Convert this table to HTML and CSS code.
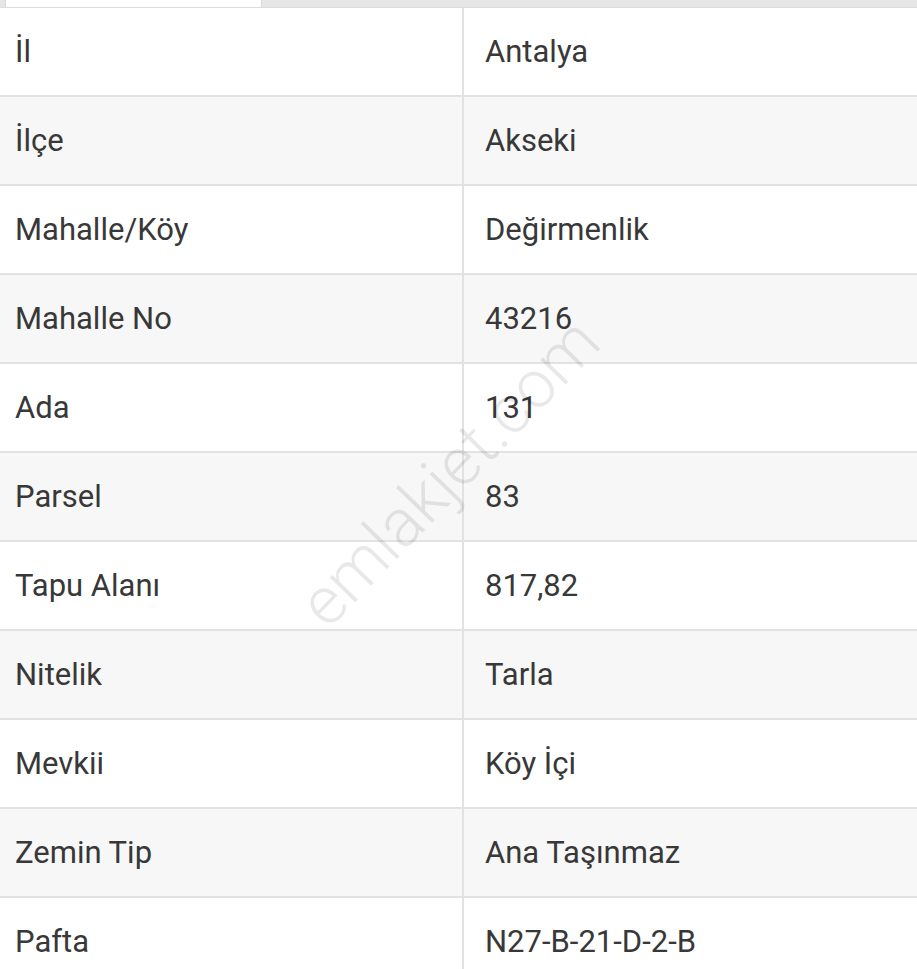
FILE: index.html
```html
<!DOCTYPE html>
<html lang="tr">
<head>
<meta charset="utf-8">
<link rel="stylesheet" href="styles.css">
</head>
<body>
<div class="page">
  <div class="tabs">
    <div class="tab"></div>
    <div class="tab-rest"></div>
  </div>
  <div class="table">
    <div class="row"><div class="key">İl</div><div class="val">Antalya</div></div>
    <div class="row alt"><div class="key">İlçe</div><div class="val">Akseki</div></div>
    <div class="row"><div class="key">Mahalle/Köy</div><div class="val">Değirmenlik</div></div>
    <div class="row alt"><div class="key">Mahalle No</div><div class="val">43216</div></div>
    <div class="row"><div class="key">Ada</div><div class="val">131</div></div>
    <div class="row alt"><div class="key">Parsel</div><div class="val">83</div></div>
    <div class="row"><div class="key">Tapu Alanı</div><div class="val">817,82</div></div>
    <div class="row alt"><div class="key">Nitelik</div><div class="val">Tarla</div></div>
    <div class="row"><div class="key">Mevkii</div><div class="val">Köy İçi</div></div>
    <div class="row alt"><div class="key">Zemin Tip</div><div class="val">Ana Taşınmaz</div></div>
    <div class="row"><div class="key">Pafta</div><div class="val">N27-B-21-D-2-B</div></div>
  </div>
  <div class="watermark">emlakjet.com</div>
</div>
</body>
</html>
```
FILE: styles.css
```css
* { box-sizing: border-box; }
html, body { margin: 0; padding: 0; background: #fff; }
body { font-family: Roboto, "Noto Sans", sans-serif; color: #383838; overflow: hidden; }
.page { position: relative; width: 917px; height: 969px; overflow: hidden; }
.tabs { display: flex; height: 8px; background: #e6e6e6; border-bottom: 1px solid #dcdcdc; }
.tab { width: 257px; margin-left: 5px; background: #fff; border-left: 1px solid #d8d8d8; border-right: 1px solid #d8d8d8; }
.tab-rest { flex: 1; }
.table { display: flex; flex-direction: column; }
.row { display: grid; grid-template-columns: 464px 1fr; height: 89px; border-bottom: 2px solid #e2e2e2; background: #fff; }
.row.alt { background: #f7f7f7; }
.key, .val { display: flex; align-items: center; font-size: 31px; line-height: 1; }
.key { padding-left: 15px; border-right: 2px solid #e2e2e2; }
.val { padding-left: 21px; }
.watermark { position: absolute; left: 449px; top: 472px; transform: translate(-50%, -50%) rotate(-46deg); font-size: 67px; font-weight: 300; color: rgba(0,0,0,0.09); white-space: nowrap; pointer-events: none; }
```
